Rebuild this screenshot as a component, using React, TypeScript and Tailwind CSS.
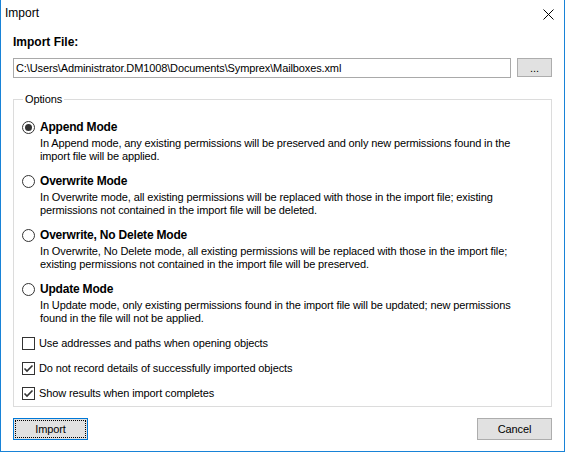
import { useState } from "react";

const font = { fontFamily: '"Liberation Sans", Arial, sans-serif' };

const modes = [
  {
    key: "append",
    title: "Append Mode",
    lines: [
      "In Append mode, any existing permissions will be preserved and only new permissions found in the",
      "import file will be applied.",
    ],
  },
  {
    key: "overwrite",
    title: "Overwrite Mode",
    lines: [
      "In Overwrite mode, all existing permissions will be replaced with those in the import file; existing",
      "permissions not contained in the import file will be deleted.",
    ],
  },
  {
    key: "nodelete",
    title: "Overwrite, No Delete Mode",
    lines: [
      "In Overwrite, No Delete mode, all existing permissions will be replaced with those in the import file;",
      "existing permissions not contained in the import file will be preserved.",
    ],
  },
  {
    key: "update",
    title: "Update Mode",
    lines: [
      "In Update mode, only existing permissions found in the import file will be updated; new permissions",
      "found in the file will not be applied.",
    ],
  },
];

function Radio({ checked }: { checked: boolean }) {
  return (
    <span className="w-[13px] h-[13px] rounded-full border border-[#333333] bg-white flex items-center justify-center shrink-0">
      {checked && <span className="w-[7px] h-[7px] rounded-full bg-[#333333]" />}
    </span>
  );
}

function Check({ checked }: { checked: boolean }) {
  return (
    <span className="w-[13px] h-[13px] border border-[#333333] bg-white flex items-center justify-center shrink-0">
      {checked && (
        <svg width="11" height="11" viewBox="0 0 11 11">
          <path d="M1.5 5.5 L4 8 L9.5 2.5" fill="none" stroke="#333333" strokeWidth="1.6" />
        </svg>
      )}
    </span>
  );
}

export default function App() {
  const [mode, setMode] = useState("append");
  const [opts, setOpts] = useState([false, true, true]);
  const optLabels = [
    "Use addresses and paths when opening objects",
    "Do not record details of successfully imported objects",
    "Show results when import completes",
  ];

  return (
    <div
      className="w-[565px] h-[452px] bg-white border-x border-b border-[#1883d7] flex flex-col text-black text-[11px] tracking-[-0.12px]"
      style={font}
    >
      {/* title bar */}
      <div className="h-[30px] flex items-start justify-between pl-[4px] pr-[10px] pt-[5px]">
        <span className="text-[12px] leading-[16px] tracking-normal">Import</span>
        <svg width="11" height="11" viewBox="0 0 11 11" className="mt-[4px]">
          <path d="M0.5 0.5 L10.5 10.5 M10.5 0.5 L0.5 10.5" stroke="#000" strokeWidth="1" />
        </svg>
      </div>

      <div className="px-[12px] pt-[5px] flex flex-col">
        <div className="font-bold text-[12px] leading-[14px] mb-[9px] tracking-normal">Import File:</div>
        <div className="flex gap-[6px] items-start">
          <div className="flex-1 h-[20px] border border-[#a9a9a9] flex items-center px-[2px] leading-[14px]">
            C:\Users\Administrator.DM1008\Documents\Symprex\Mailboxes.xml
          </div>
          <button className="w-[35px] h-[19px] border border-[#adadad] bg-[#e1e1e1] flex items-center justify-center leading-[14px]">
            ...
          </button>
        </div>

        {/* options group */}
        <div className="relative mt-[21px] h-[308px] border border-[#dcdcdc] pt-[19px] pl-[8px]">
          <span className="absolute -top-[8px] left-[9px] bg-white px-[2px] leading-[14px]">Options</span>
          {modes.map((m) => (
            <div key={m.key} className="h-[54px] cursor-default" onClick={() => setMode(m.key)}>
              <div className="h-[16px] flex items-center gap-[5px]">
                <Radio checked={mode === m.key} />
                <span className="font-bold text-[12px] tracking-[-0.2px]">{m.title}</span>
              </div>
              <div className="pl-[18px] pt-[2px] leading-[13px]">
                {m.lines.map((l) => (
                  <div key={l}>{l}</div>
                ))}
              </div>
            </div>
          ))}
          <div className="-mt-[4px]">
            {optLabels.map((l, i) => (
              <div
                key={l}
                className="h-[25px] flex items-center gap-[4px]"
                onClick={() => setOpts(opts.map((v, j) => (j === i ? !v : v)))}
              >
                <Check checked={opts[i]} />
                <span>{l}</span>
              </div>
            ))}
          </div>
        </div>

        <div className="mt-[11px] flex justify-between">
          <button className="w-[75px] h-[22px] border border-[#0078d7] bg-[#e1e1e1] p-[1px]">
            <span className="w-full h-full flex items-center justify-center border border-dotted border-black leading-[14px]">
              Import
            </span>
          </button>
          <button className="w-[75px] h-[22px] border border-[#adadad] bg-[#e1e1e1] flex items-center justify-center leading-[14px]">
            Cancel
          </button>
        </div>
      </div>
    </div>
  );
}
